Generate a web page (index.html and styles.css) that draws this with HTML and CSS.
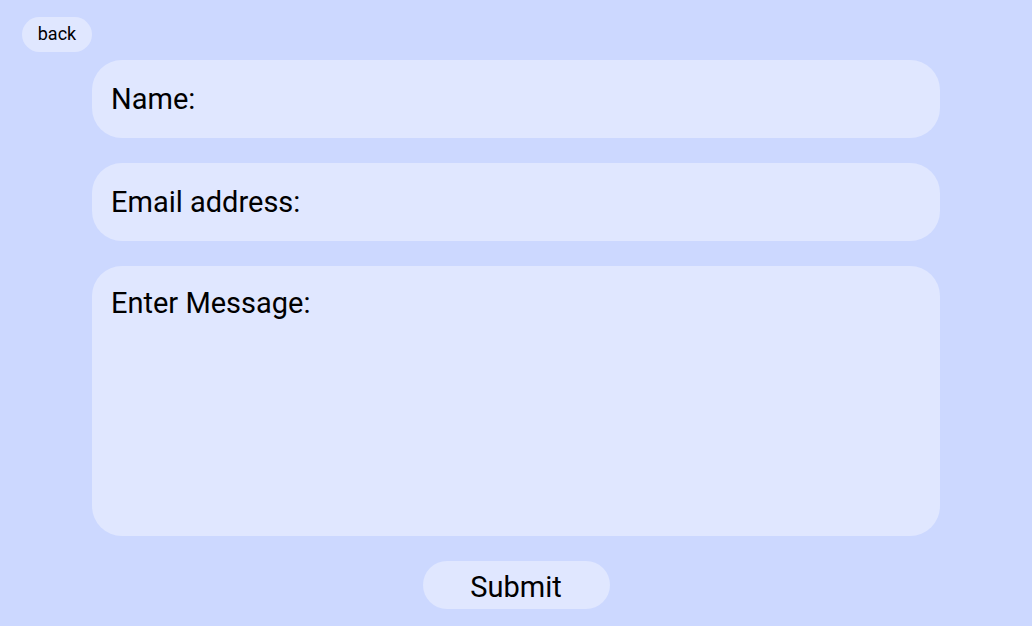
FILE: index.html
```html
<!DOCTYPE html>
<html>
<head>
<meta charset="utf-8">
<link rel="stylesheet" href="styles.css">
</head>
<body>
<div class="page">
  <div class="top"><button class="back">back</button></div>
  <form class="form">
    <div class="field">Name:</div>
    <div class="field">Email address:</div>
    <div class="field message">Enter Message:</div>
    <button class="submit" type="button">Submit</button>
  </form>
</div>
</body>
</html>
```
FILE: styles.css
```css
html, body {
  margin: 0;
  padding: 0;
  background: #ccd8ff;
  font-family: Roboto, "Liberation Sans", sans-serif;
  color: #000;
}
.page {
  width: 1032px;
  height: 626px;
  padding-top: 17px;
  box-sizing: border-box;
}
.top {
  padding-left: 22px;
  height: 35px;
}
.back {
  width: 70px;
  height: 35px;
  border: none;
  border-radius: 18px;
  background: #e0e7ff;
  font-family: Roboto, "Liberation Sans", sans-serif;
  font-size: 18px;
  color: #000;
  padding: 0 0 3px 0;
}
.form {
  margin: 8px 0 0 92px;
  width: 848px;
  display: flex;
  flex-direction: column;
  gap: 25px;
  align-items: stretch;
}
.field {
  height: 78px;
  box-sizing: border-box;
  background: #e0e7ff;
  border-radius: 30px;
  padding: 0 19px;
  font-size: 29px;
  display: flex;
  align-items: center;
}
.field.message {
  height: 270px;
  align-items: flex-start;
  padding-top: 20px;
}
.submit {
  align-self: center;
  width: 187px;
  height: 48px;
  border: none;
  border-radius: 24px;
  background: #e0e7ff;
  font-family: Roboto, "Liberation Sans", sans-serif;
  font-size: 29px;
  color: #000;
  padding: 3px 0 0 0;
}
```
